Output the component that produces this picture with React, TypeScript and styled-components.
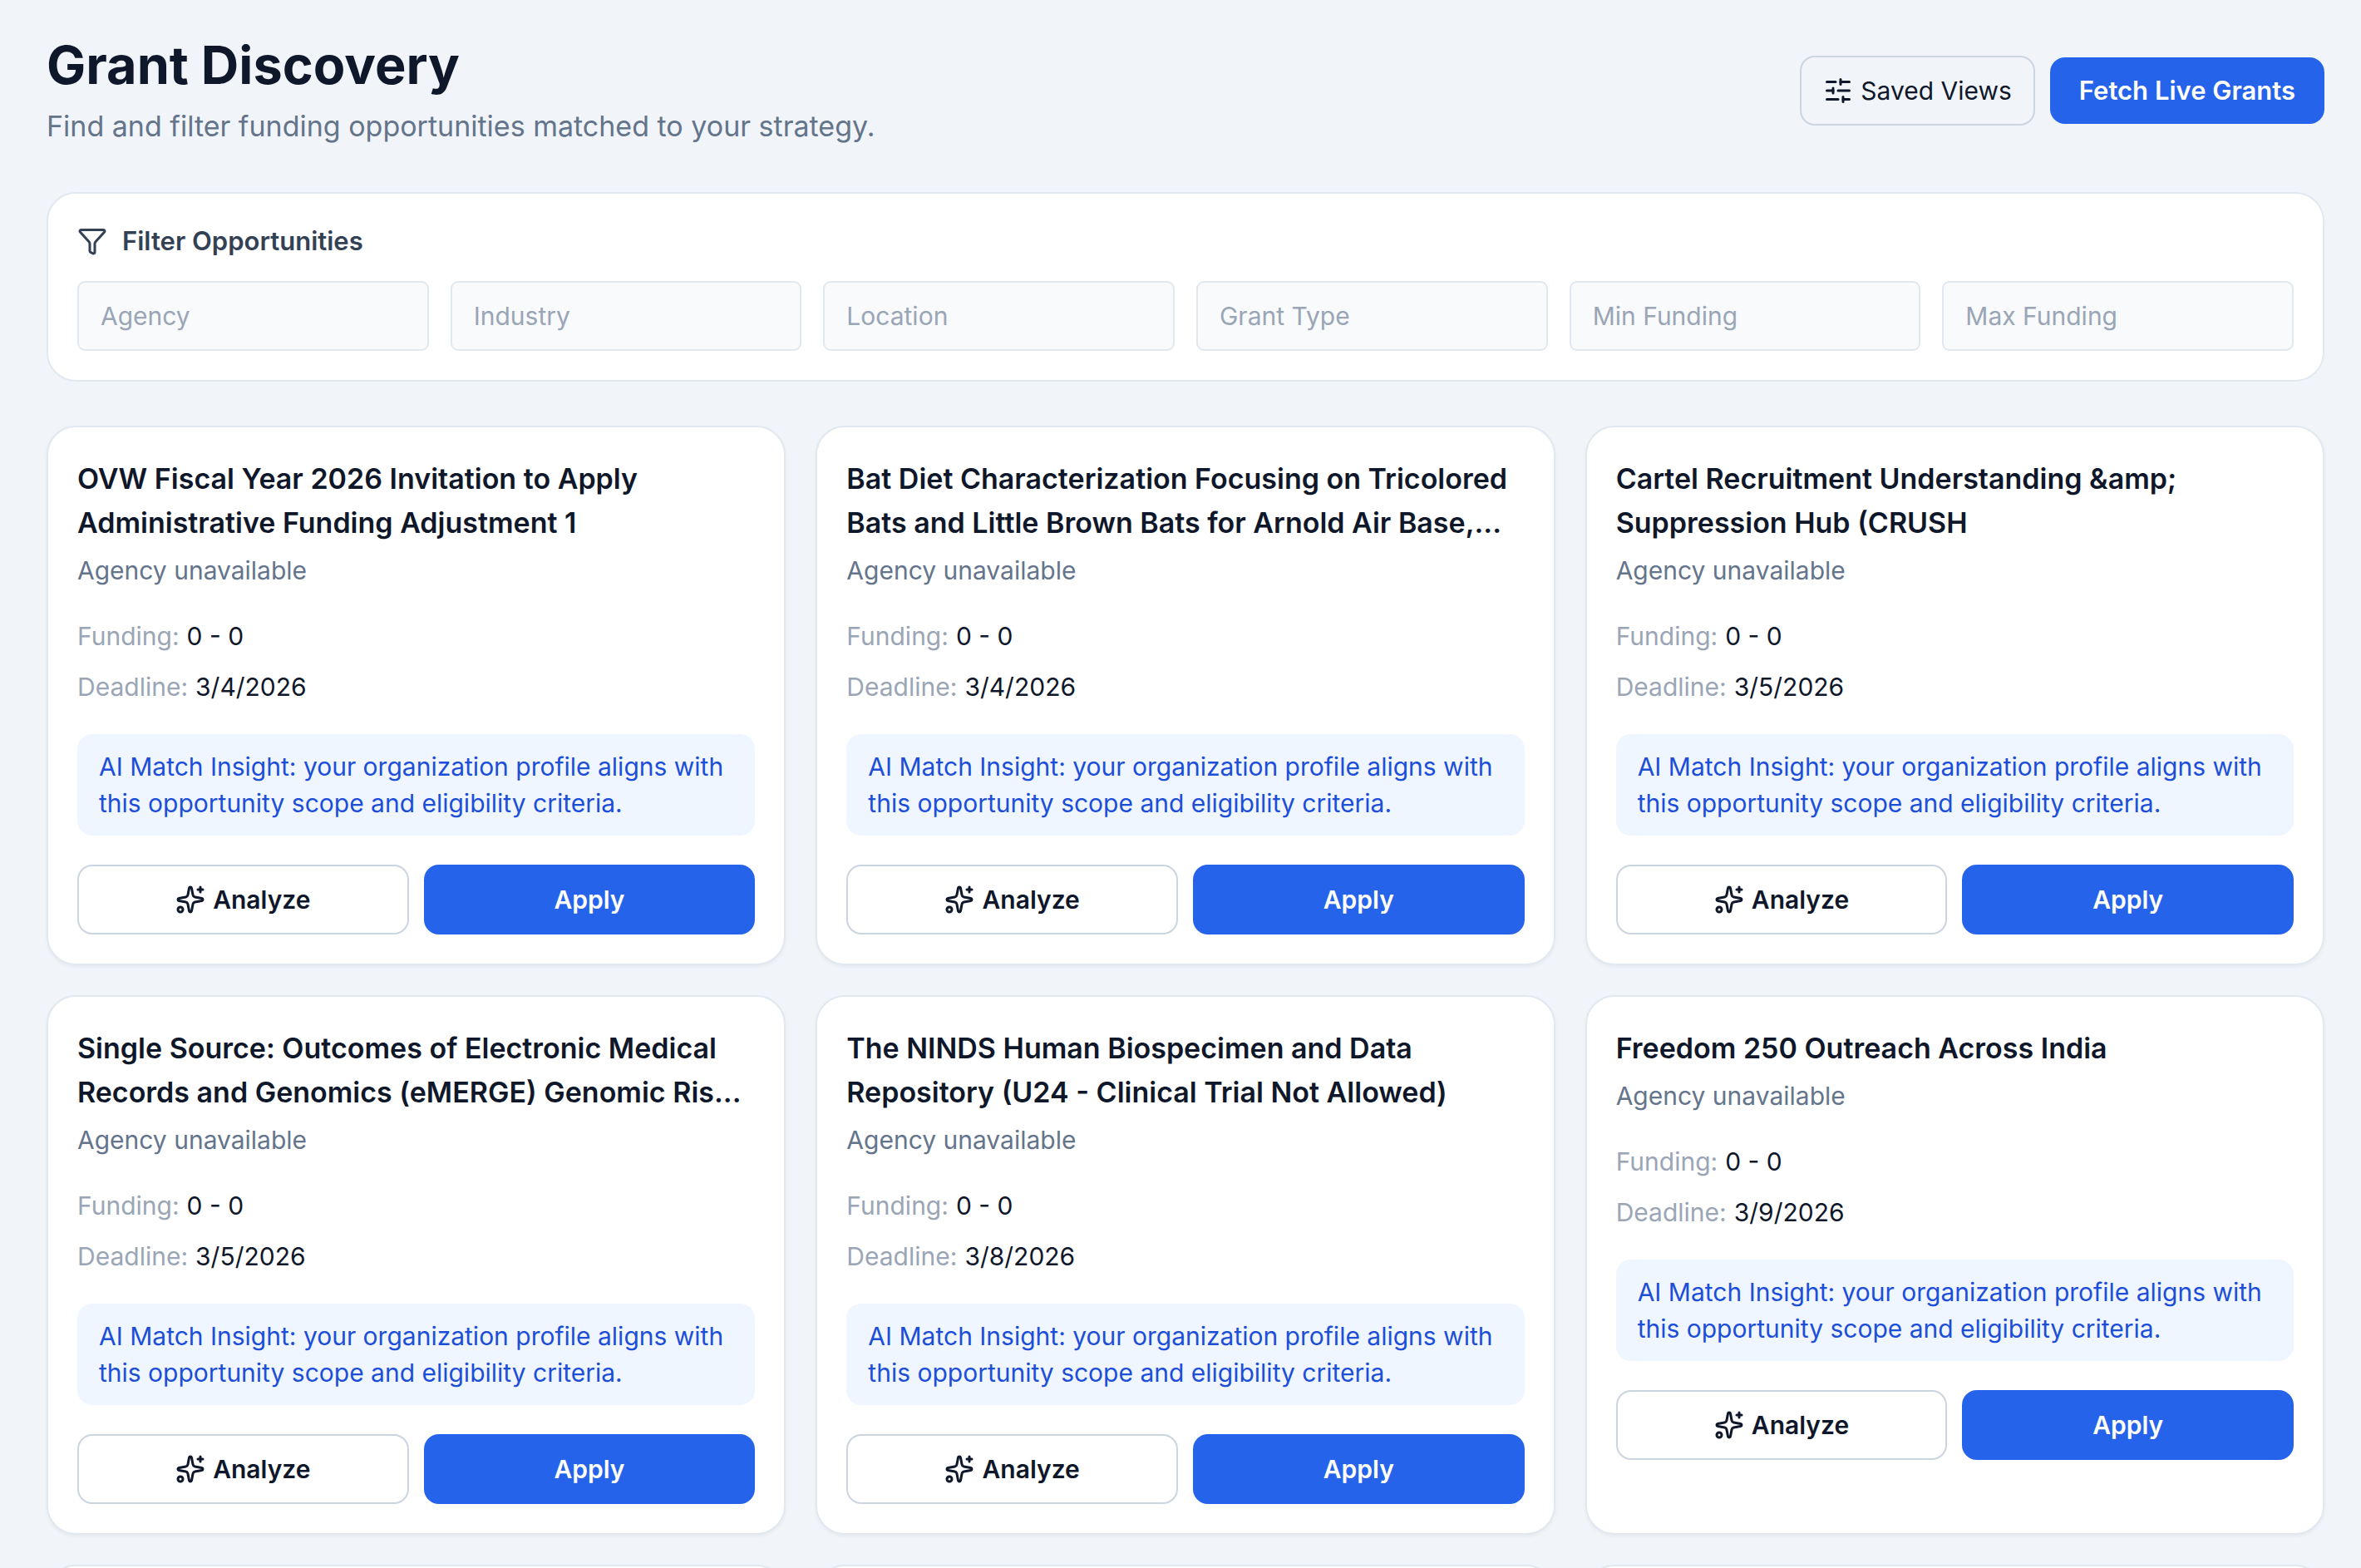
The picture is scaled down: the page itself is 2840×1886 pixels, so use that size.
import React from "react";
import styled, { createGlobalStyle } from "styled-components";
import { Filter, SlidersHorizontal, Sparkles } from "lucide-react";

const GlobalStyle = createGlobalStyle`
  *, *::before, *::after { box-sizing: border-box; }
  body {
    margin: 0;
    background: #f1f5f9;
    color: #0f172a;
    font-family: Inter, "Liberation Sans", sans-serif;
    font-size: 30px;
    line-height: 44px;
  }
  h1, h2, p, dl, dd { margin: 0; }
  button, input { font: inherit; color: inherit; }
`;

const Page = styled.main`
  display: flex;
  flex-direction: column;
  gap: 53px;
  height: 100vh;
  overflow: hidden;
  padding: 39px 44px 0 56px;
`;

const Header = styled.header`
  display: flex;
  align-items: center;
  justify-content: space-between;
`;

const PageTitle = styled.h1`
  font-size: 63px;
  font-weight: 700;
  line-height: 79px;
`;

const Subtitle = styled.p`
  margin-top: 8px;
  font-size: 34px;
  line-height: 52px;
  color: #64748b;
`;

const HeaderActions = styled.div`
  display: flex;
  align-items: center;
  gap: 18px;
`;

const OutlineButton = styled.button<{ $strong?: boolean }>`
  display: inline-flex;
  align-items: center;
  justify-content: center;
  gap: 9px;
  padding: 18px 26px;
  border: 2px solid #cbd5e1;
  border-radius: 18px;
  background: transparent;
  font-weight: ${(p) => (p.$strong ? 600 : 400)};
  cursor: pointer;
`;

const PrimaryButton = styled.button<{ $large?: boolean }>`
  padding: 18px 35px;
  border: 0;
  border-radius: 18px;
  background: #2563eb;
  color: #fff;
  font-size: ${(p) => (p.$large ? 31 : 30)}px;
  font-weight: 600;
  cursor: pointer;
`;

const FilterPanel = styled.section`
  flex-shrink: 0;
  padding: 35px;
  border: 2px solid #e2e8f0;
  border-radius: 35px;
  background: #fff;
`;

const FilterHeading = styled.h2`
  display: flex;
  align-items: center;
  gap: 18px;
  margin-bottom: 26px;
  font-size: 31px;
  font-weight: 600;
  color: #334155;
`;

const FilterGrid = styled.div`
  display: grid;
  grid-template-columns: repeat(6, minmax(0, 1fr));
  gap: 26px;
`;

const FilterInput = styled.input`
  width: 100%;
  height: 84px;
  padding: 0 26px;
  border: 2px solid #e2e8f0;
  border-radius: 9px;
  background: #f8fafc;
  &::placeholder { color: #9aa5b5; opacity: 1; }
`;

const GrantGrid = styled.section`
  display: grid;
  grid-template-columns: repeat(3, minmax(0, 1fr));
  gap: 36px;
`;

const Card = styled.article`
  min-height: 180px;
  padding: 35px;
  border: 2px solid #e2e8f0;
  border-radius: 35px;
  background: #fff;
  box-shadow: 0 2px 4px rgba(0, 0, 0, 0.05);
`;

const CardTitle = styled.h2`
  font-size: 34px;
  font-weight: 600;
  line-height: 53px;
`;

const Agency = styled.p`
  margin-top: 9px;
  color: #64748b;
`;

const Facts = styled.dl`
  display: grid;
  gap: 17px;
  margin-top: 35px;
`;

const Fact = styled.div`
  display: flex;
  gap: 9px;
  dt { color: #9aa5b5; }
`;

const Insight = styled.p`
  margin-top: 35px;
  padding: 17px 26px;
  border-radius: 18px;
  background: #eff6ff;
  color: #1d4ed8;
`;

const CardActions = styled.div`
  display: grid;
  grid-template-columns: 1fr 1fr;
  gap: 18px;
  margin-top: 35px;
`;

const filters = ["Agency", "Industry", "Location", "Grant Type", "Min Funding", "Max Funding"];

const grants = [
  { title: "OVW Fiscal Year 2026 Invitation to Apply Administrative Funding Adjustment 1", deadline: "3/4/2026" },
  { title: "Bat Diet Characterization Focusing on Tricolored Bats and Little Brown Bats for Arnold Air Base,...", deadline: "3/4/2026" },
  { title: "Cartel Recruitment Understanding &amp; Suppression Hub (CRUSH", deadline: "3/5/2026" },
  { title: "Single Source: Outcomes of Electronic Medical Records and Genomics (eMERGE) Genomic Ris...", deadline: "3/5/2026" },
  { title: "The NINDS Human Biospecimen and Data Repository (U24 - Clinical Trial Not Allowed)", deadline: "3/8/2026" },
  { title: "Freedom 250 Outreach Across India", deadline: "3/9/2026" },
];

function GrantCard({ title, deadline }: { title: string; deadline: string }) {
  return (
    <Card>
      <CardTitle>{title}</CardTitle>
      <Agency>Agency unavailable</Agency>
      <Facts>
        <Fact><dt>Funding:</dt><dd>0 - 0</dd></Fact>
        <Fact><dt>Deadline:</dt><dd>{deadline}</dd></Fact>
      </Facts>
      <Insight>
        AI Match Insight: your organization profile aligns with this opportunity scope and eligibility criteria.
      </Insight>
      <CardActions>
        <OutlineButton type="button" $strong><Sparkles size={36} aria-hidden />Analyze</OutlineButton>
        <PrimaryButton type="button">Apply</PrimaryButton>
      </CardActions>
    </Card>
  );
}

export default function App() {
  return (
    <>
      <GlobalStyle />
      <Page>
        <Header>
          <div>
            <PageTitle>Grant Discovery</PageTitle>
            <Subtitle>Find and filter funding opportunities matched to your strategy.</Subtitle>
          </div>
          <HeaderActions>
            <OutlineButton type="button"><SlidersHorizontal size={36} aria-hidden />Saved Views</OutlineButton>
            <PrimaryButton type="button" $large>Fetch Live Grants</PrimaryButton>
          </HeaderActions>
        </Header>
        <FilterPanel>
          <FilterHeading><Filter size={36} aria-hidden />Filter Opportunities</FilterHeading>
          <FilterGrid>
            {filters.map((name) => (
              <FilterInput key={name} type="text" placeholder={name} aria-label={name} />
            ))}
          </FilterGrid>
        </FilterPanel>
        <GrantGrid>
          {grants.map((grant) => <GrantCard key={grant.title} {...grant} />)}
          <Card />
          <Card />
          <Card />
        </GrantGrid>
      </Page>
    </>
  );
}
